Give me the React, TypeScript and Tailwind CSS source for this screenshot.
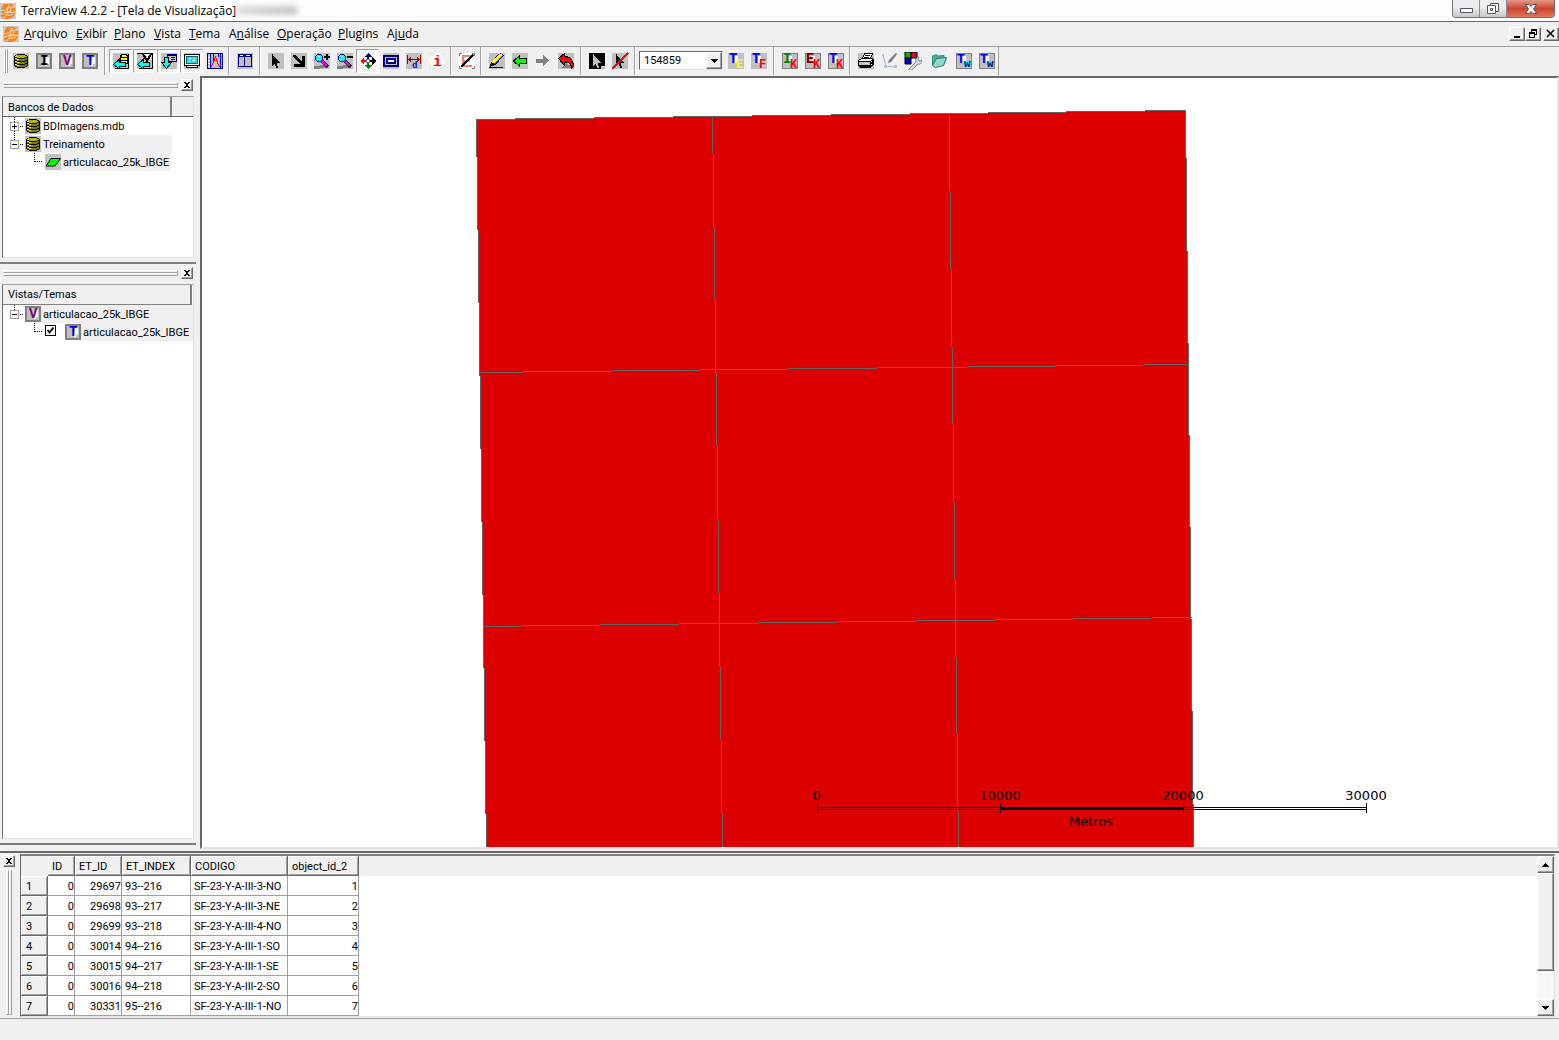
import { ReactNode, useState } from "react";

const uiFont = "font-['Open_Sans','Noto_Sans',sans-serif]";
const listFont = "font-['Roboto','Liberation_Sans',sans-serif]";

// 16x16 toolbar glyph on the classic gray tile
function Icon({ bg = "#c0c0c0", children }: { bg?: string; children: ReactNode }) {
  return (
    <svg viewBox="0 0 16 16" shapeRendering="crispEdges" className="h-4 w-4 shrink-0 overflow-visible" aria-hidden="true">
      <rect width="16" height="16" fill={bg} />
      {children}
    </svg>
  );
}

function Letter({ x, y, size, fill, children }: { x: number; y: number; size: number; fill: string; children: string }) {
  return (
    <text x={x} y={y} fontSize={size} fill={fill} fontWeight="bold" fontFamily="Liberation Mono, monospace">
      {children}
    </text>
  );
}

function AppLogo() {
  return (
    <svg viewBox="0 0 16 16" className="h-4 w-4 shrink-0" aria-hidden="true">
      <rect width="16" height="16" fill="#c9c9c9" />
      <path d="M4 1h8l3 3v6l-2 4-4 2H4l-3-3V8l1-4z" fill="#f58220" />
      <path d="M1 8c2-1 4 0 6-2s4-2 8-2M1 11c3 0 4-2 7-2s4 1 7 0M4 15c1-3 3-3 5-3s3 0 4-1M7 6l1 3-2 3M9 2L7 6M11 5l-1 4" stroke="#ffe9d0" strokeWidth="1" fill="none" />
    </svg>
  );
}

function Database() {
  return (
    <Icon>
      <path d="M1 3h1V2h2V1h8v1h2v1h1v10h-1v1h-2v1H4v-1H2v-1H1z" fill="#000" />
      <path d="M3 2h9v1h2v1h-2v1H4V4H2V3h1z" fill="#b5b500" />
      <path d="M2 5h2v1h8V5h2v2h-2v1H4V7H2zM2 8h2v1h8V8h2v2h-2v1H4v-1H2zM2 11h2v1h8v-1h2v2h-2v1H4v-1H2z" fill="#808000" />
      <path d="M2 3h2v1H2zM2 5h2v1h2v1H4V6H2zM2 8h2v1h2v1H4V9H2zM2 11h2v1h2v1H4v-1H2z" fill="#ffff00" />
    </Icon>
  );
}

function Framed({ letter, color }: { letter: string; color: string }) {
  return (
    <Icon bg="#808080">
      <path d="M2 2h12v12H2z" fill="#c0c0c0" />
      <path d="M10 4h3v7h-2v2h-2z" fill="#fff" />
      <Letter x={4} y={12} size={14} fill={color}>{letter}</Letter>
    </Icon>
  );
}

function Paired({ a, b, ca, cb, framed }: { a: string; b: string; ca: string; cb: string; framed?: boolean }) {
  return (
    <Icon bg={framed ? "#808080" : "#c0c0c0"}>
      {framed && <path d="M1 1h14v14H1z" fill="#c0c0c0" />}
      <path d="M7 3h3v7H7z" fill="#fff" />
      <Letter x={1} y={10} size={14} fill={ca}>{a}</Letter>
      <Letter x={8} y={15} size={12} fill={cb}>{b}</Letter>
    </Icon>
  );
}

const cyanArrow = <path d="M.5 11.5L6 6.5v3h6.5v4H6v2z" fill="#00ffff" stroke="#000" />;

function ToDatabase() {
  return (
    <Icon>
      <path d="M8 1h6v1h1v9H7V2h1z" fill="#000" />
      <path d="M9 2h4v1h1v1H9zM8 5h6v2H8zM8 8h6v2H8z" fill="#ffff00" />
      <path d="M15 1h1v15H2v-1h13z" fill="#000" />
      {cyanArrow}
    </Icon>
  );
}

function ToView() {
  return (
    <Icon>
      <path d="M9 1h5v6h-3z" fill="#fff" />
      <path d="M15 0h1v16H2v-1h13zM0 0h16v1H0z" fill="#000" />
      <path d="M6 1l4 7 4-7" stroke="#000" strokeWidth="2" fill="none" />
      {cyanArrow}
    </Icon>
  );
}

function DownTable() {
  return (
    <Icon>
      <path d="M6 1h10v8H6z" fill="#000080" />
      <path d="M7 3h8v5H7z" fill="#c0c0c0" />
      <path d="M10 4h4v1h-4zM10 6h4v1h-4z" fill="#000080" />
      <path d="M3.500 4.500h4v5h3L5.500 15.500 .500 9.500h3z" fill="#00ffff" stroke="#000" />
    </Icon>
  );
}

function Monitor() {
  return (
    <Icon>
      <path d="M0 1h16v12H0z" fill="#000" />
      <path d="M1 2h14v10H1z" fill="#fff" />
      <path d="M2 3h12v8H2z" fill="#006868" />
      <path d="M3 4h10v6H3z" fill="#20e0e0" />
      <path d="M5 5h2v1H5zM8 7h3v1H8zM5 8h1v1H5zM10 5h1v1h-1z" fill="#fff" />
      <path d="M2 13h12v2H2z" fill="#000" />
      <path d="M3 13h10v1H3z" fill="#fff" />
    </Icon>
  );
}

function Histogram() {
  return (
    <Icon>
      <path d="M0 0h1v16H0zM15 0h1v16h-1zM0 15h16v1H0zM0 0h16v1H0z" fill="#000080" />
      <path d="M3 1h1v14H3zM13 1h1v14h-1zM6 1h1v7H6zM11 1h1v3h-1z" fill="#0000ff" />
      <path d="M1 13h2v1H1zM1 10h2v1H1zM1 7h2v1H1zM1 4h2v1H1z" fill="#fff" />
      <path d="M4 12h1v2H4zM5 10h1v2H5zM6 8h1v2H6zM7 5h1v3H7zM8 3h1v2H8zM9 5h1v3H9zM10 8h1v3h-1zM11 11h1v2h-1zM12 13h1v1h-1z" fill="#ff0000" />
    </Icon>
  );
}

function Windows() {
  return (
    <Icon>
      <path d="M1 1h14v13H1z" fill="#000080" />
      <path d="M2 4h5v9H2zM8 4h6v9H8z" fill="#c0c0c0" />
      <path d="M3 2h3v1H3zM9 2h4v1H9z" fill="#fff" />
    </Icon>
  );
}

const pointer = "M4 1v12h1v-1h1v-1h1v2h1v2h2v-2H9v-3h3V9h-1V8h-1V7H9V6H8V5H7V4H6V3H5V1z";

function Pointer() {
  return <Icon><path d={pointer} fill="#000" /></Icon>;
}

function ArrowCorner() {
  return (
    <Icon>
      <path d="M2 2h2l7 7V3h3v11H3v-3h6L2 4z" fill="#000" />
    </Icon>
  );
}

function Magnifier({ plus }: { plus?: boolean }) {
  return (
    <Icon>
      <path d="M0 13h6v3H0zM6 12h8v3H6z" fill="#808080" />
      <path d="M3 1h4v1h1v1h1v4H8v1H7v1H3V8H2V7H1V3h1V2h1z" fill="#000080" />
      <path d="M3 2h4v1h1v4H7v1H3V7H2V3h1z" fill="#00ffff" />
      <path d="M4 3h2v1H4z" fill="#fff" />
      <path d="M8 8l6 6" stroke="#000" strokeWidth="3" />
      <path d="M8 8l5 5" stroke="#ff00ff" strokeWidth="2" />
      <path d={plus ? "M10 3h6v2h-6zM12 1h2v6h-2z" : "M10 3h6v2h-6z"} fill="#000" />
    </Icon>
  );
}

function Pan() {
  return (
    <Icon bg="none">
      <path d="M8 0l4 4H9v3H7V4H4z" fill="#000080" />
      <path d="M8 16l4-4H9V9H7v3H4z" fill="#008000" />
      <path d="M0 8l4-4v3h3v2H4v3z" fill="#ff0000" />
      <path d="M16 8l-4-4v3H9v2h3v3z" fill="#000" />
      <path d="M6.500 6.500h3v3h-3z" fill="#fff" stroke="#808080" />
    </Icon>
  );
}

function FitWindow() {
  return (
    <Icon>
      <path d="M0 2h16v12H0z" fill="#000080" />
      <path d="M2 4h12v8H2z" fill="#c0c0c0" />
      <path d="M3 5h10v6H3z" fill="#000080" />
      <path d="M5 7h1v2H5zM10 7h1v2h-1zM6 7h4v2H6z" fill="#fff" />
    </Icon>
  );
}

function Distance() {
  return (
    <Icon>
      <path d="M1 2h1v9H1zM14 2h1v9h-1zM2 6h12v1H2zM3 5h1v3H3zM12 5h1v3h-1zM4 4h1v5H4zM11 4h1v5h-1z" fill="#aa0000" />
      <Letter x={6} y={15} size={9} fill="#0000ff">d</Letter>
    </Icon>
  );
}

function Info() {
  return (
    <Icon bg="#dcecf0">
      <circle cx="8" cy="8" r="8" fill="#fff" />
      <Letter x={4} y={13} size={15} fill="#ff0000">i</Letter>
    </Icon>
  );
}

function NoEdit() {
  return (
    <Icon>
      <path d="M2 0h12l2 2v12l-2 2H2l-2-2V2z" fill="#fff" />
      <path d="M3 2h11v2H5v3h6v2H5v3h8v2H3z" fill="#f08080" />
      <path d="M2 14L14 2" stroke="#000" strokeWidth="2" />
      <path d="M0 0h3v1H1v2H0zM13 0h3v3h-1V1h-2zM0 13h1v2h2v1H0zM15 13h1v3h-3v-1h2z" fill="#808080" />
    </Icon>
  );
}

function Pencil() {
  return (
    <Icon>
      <path d="M4 11L13 1" stroke="#000080" strokeWidth="5" />
      <path d="M4 10L12 1" stroke="#ffff00" strokeWidth="3" />
      <path d="M5 11L14 2" stroke="#808080" strokeWidth="1" />
      <path d="M1 14l1-5 4 3z" fill="#000" />
      <path d="M0 14h14v1H0z" fill="#000" />
    </Icon>
  );
}

function Previous() {
  return <Icon><path d="M1.500 8L7.500 2.500v3h7v5h-7v3z" fill="#00ff00" stroke="#000" /></Icon>;
}

function Next() {
  return (
    <Icon bg="#f0f0f0">
      <path d="M2 7h6V3l7 6-7 5v-4H2z" fill="#fff" />
      <path d="M1 6h7V2l6 6-6 5v-3H1z" fill="#808080" />
    </Icon>
  );
}

function Undo() {
  return (
    <Icon>
      <path d="M8 10l8 5H4z" fill="#808080" />
      <path d="M.5 5.500L6.500.500v3c6 0 9 5 9 10l-2 2c0-5-3-7-7-6v3z" fill="#ff0000" stroke="#000" />
    </Icon>
  );
}

function InvertPointer() {
  return (
    <Icon bg="#000">
      <path d={pointer} fill="#c0c0c0" />
      <path d="M12 13h4v3h-4z" fill="#c0c0c0" />
    </Icon>
  );
}

function ClearPointer() {
  return (
    <Icon>
      <path d={pointer} fill="#000" />
      <path d="M0 16L16 0" stroke="#ff0000" strokeWidth="2" />
    </Icon>
  );
}

function Printer() {
  return (
    <Icon>
      <path d="M4.500 5.500l2-5h8l-2 5z" fill="#fff" stroke="#000" />
      <path d="M7 2h5v1H7zM6 4h5v1H6z" fill="#000" />
      <path d="M.500 7.500l3-2h11l1 1v5l-3 3h-10l-2-2z" fill="#fff" stroke="#000" />
      <path d="M1 8h11v1H1zM1 12h11v2H1zM12 8l3-2v6l-3 2z" fill="#000" />
      <path d="M1 9h11v3H1z" fill="#c0c0c0" />
      <path d="M7 10h3v1H7z" fill="#ffff00" />
      <path d="M13 8h1v1h-1zM13 11h1v1h-1z" fill="#fff" />
    </Icon>
  );
}

function DrawPen() {
  return (
    <svg viewBox="0 0 16 16" className="h-4 w-4" aria-hidden="true">
      <path d="M2 2l3 11 9 1" stroke="#9db9d8" fill="none" />
      <path d="M1 1h2v2H1zM3 12h3v3H3zM13 12h3v3h-3z" fill="#a9c4e4" />
      <path d="M15 0l-7 7-1 3 3-1 6-8z" fill="#777" stroke="#aaa" strokeWidth=".5" />
    </svg>
  );
}

function ColorTools() {
  return (
    <svg viewBox="0 0 18 18" className="h-[18px] w-[18px]" aria-hidden="true">
      <path d="M1 0h6v6H1z" fill="#00b400" stroke="#000" />
      <path d="M7 0h6v6H7z" fill="#e00030" stroke="#000" />
      <path d="M1 6h6v6H1z" fill="#0000c8" stroke="#000" />
      <path d="M5 17l7-7c-1-3 1-5 3-5l-1 3 2 1 2-1c0 3-2 5-4 4l-6 6c-2 1-4 0-3-1z" fill="#d6dde6" stroke="#7e8894" />
    </svg>
  );
}

function OpenFolder() {
  return (
    <svg viewBox="0 0 16 16" className="h-4 w-4" aria-hidden="true">
      <path d="M1.500 12V3l4-1.500L7 3l6-.5V6" fill="#4fae9c" stroke="#2d8b7c" />
      <path d="M1.500 12.500l4-7 10-1-3 8-8 2z" fill="#8fdcca" stroke="#22796c" />
    </svg>
  );
}

function ThemeWindow() {
  return (
    <Icon bg="#808080">
      <path d="M1 1h14v14H1z" fill="#c0c0c0" />
      <path d="M7 3h3v6H7z" fill="#fff" />
      <Letter x={1} y={10} size={13} fill="#0000ff">T</Letter>
      <path d="M8 8h7v5h-2v1h-1v-1h-1v1h-1v-1H8z" fill="#00ffff" />
      <Letter x={8} y={14} size={11} fill="#000080">w</Letter>
    </Icon>
  );
}

type Tool = { name: string; icon: ReactNode; width?: string; pressed?: boolean };

function ToolGroup({ tools, end = "pr-2" }: { tools: Tool[]; end?: string }) {
  return (
    <div className={`flex items-center ${end}`}>
      {tools.map((tool) => (
        <button
          key={tool.name}
          aria-label={tool.name}
          className={`flex h-6 items-center justify-center ${tool.width ?? "w-[23px]"} ${
            tool.pressed
              ? "border border-t-[#a0a0a0] border-l-[#a0a0a0] border-r-white border-b-white bg-[repeating-conic-gradient(#fff_0_25%,#f0f0f0_0_50%)] bg-[length:2px_2px]"
              : ""
          }`}
        >
          {tool.icon}
        </button>
      ))}
    </div>
  );
}

function Separator() {
  return <div className="-ml-[5px] mr-[3px] h-7 w-[2px] border-l border-l-[#a0a0a0] border-r border-r-white" />;
}

const dataTools: Tool[] = [
  { name: "Banco de dados", icon: <Database /> },
  { name: "Importar", icon: <Framed letter="I" color="#000" /> },
  { name: "Vista", icon: <Framed letter="V" color="#800080" /> },
  { name: "Tema", icon: <Framed letter="T" color="#0000ff" /> },
];
const panelTools: Tool[] = [
  { name: "Painel de bancos", icon: <ToDatabase />, width: "w-6", pressed: true },
  { name: "Painel de vistas", icon: <ToView />, width: "w-6", pressed: true },
  { name: "Painel de tabela", icon: <DownTable />, pressed: true },
  { name: "Painel de desenho", icon: <Monitor />, pressed: true },
  { name: "Histograma", icon: <Histogram /> },
];
const windowTools: Tool[] = [{ name: "Janelas", icon: <Windows /> }];
const cursorTools: Tool[] = [
  { name: "Cursor", icon: <Pointer /> },
  { name: "Zoom por área", icon: <ArrowCorner /> },
  { name: "Ampliar", icon: <Magnifier plus /> },
  { name: "Reduzir", icon: <Magnifier /> },
  { name: "Mover", icon: <Pan />, pressed: true },
  { name: "Enquadrar", icon: <FitWindow /> },
  { name: "Distância", icon: <Distance /> },
  { name: "Informação", icon: <Info /> },
];
const editTools: Tool[] = [{ name: "Sem edição", icon: <NoEdit /> }];
const drawTools: Tool[] = [
  { name: "Desenhar", icon: <Pencil /> },
  { name: "Anterior", icon: <Previous /> },
  { name: "Próximo", icon: <Next /> },
  { name: "Desfazer", icon: <Undo /> },
];
const selectTools: Tool[] = [
  { name: "Inverter seleção", icon: <InvertPointer /> },
  { name: "Limpar seleção", icon: <ClearPointer /> },
];
const scaleTools: Tool[] = [
  { name: "Tema por escala", icon: <Paired a="T" b="E" ca="#0000ff" cb="#ffff00" /> },
  { name: "Tema fixo", icon: <Paired a="T" b="F" ca="#0000ff" cb="#ff0000" /> },
];
const kernelTools: Tool[] = [
  { name: "Importar KML", icon: <Paired framed a="I" b="K" ca="#008000" cb="#ff0000" /> },
  { name: "Exportar KML", icon: <Paired framed a="E" b="K" ca="#800000" cb="#ff0000" /> },
  { name: "Tema KML", icon: <Paired framed a="T" b="K" ca="#0000ff" cb="#ff0000" /> },
];
const outputTools: Tool[] = [
  { name: "Imprimir", icon: <Printer /> },
  { name: "Editar geometria", icon: <DrawPen /> },
  { name: "Ferramentas", icon: <ColorTools />, width: "w-[26px]" },
  { name: "Abrir", icon: <OpenFolder />, width: "w-[26px]" },
  { name: "Tema web", icon: <ThemeWindow /> },
  { name: "Serviço web", icon: <ThemeWindow /> },
];

const raised = "border border-t-white border-l-white border-r-[#696969] border-b-[#696969] bg-[#f0f0f0] shadow-[inset_-1px_-1px_0_#a0a0a0]";

const menus = [
  ["", "A", "rquivo", "w-[52px]"],
  ["", "E", "xibir", "w-[38px]"],
  ["", "P", "lano", "w-10"],
  ["", "V", "ista", "w-[35px]"],
  ["", "T", "ema", "w-10"],
  ["A", "n", "álise", "w-12"],
  ["", "O", "peração", "w-[61px]"],
  ["", "P", "lugins", "w-[49px]"],
  ["Aj", "u", "da", "w-10"],
];

function TitleBar() {
  return (
    <header className="flex h-[22px] shrink-0 items-start justify-between border-b border-[#696969] bg-[#fdfdfd]">
      <div className="flex h-[21px] items-center gap-[5px]">
        <AppLogo />
        <h1 className="text-xs whitespace-nowrap">TerraView 4.2.2 - [Tela de Visualização]</h1>
        <span className="-ml-1 h-[7px] w-[60px] bg-linear-to-r from-[#d4d4d4] to-[#b4b4b4] blur-[3px]" />
      </div>
      <div className="mr-1 flex h-[18px] overflow-hidden rounded-b-[4px] border border-t-0 border-[#707078]">
        <button aria-label="Minimizar" className="flex w-[27px] items-center justify-center border-r border-[#8c8c94] bg-linear-to-b from-[#eeeef0] from-40% to-[#c8c8cc]">
          <svg viewBox="0 0 13 5" className="mt-1 h-[5px] w-[13px]"><path d="M.5.5h12v4H.5z" fill="#fff" stroke="#535666" /></svg>
        </button>
        <button aria-label="Restaurar" className="flex w-[27px] items-center justify-center border-r border-[#8c8c94] bg-linear-to-b from-[#eeeef0] from-40% to-[#c8c8cc]">
          <svg viewBox="0 0 12 12" className="h-3 w-3" fill="#fff" stroke="#535666">
            <path d="M3.500.500h8v8h-8z" />
            <path d="M.500 2.500h8v8h-8z" />
            <path d="M3.500 5.500h2v2h-2z" />
          </svg>
        </button>
        <button aria-label="Fechar" className="flex w-[47px] items-center justify-center bg-linear-to-b from-[#e59a88] via-[#c9452c] via-50% to-[#dd7358]">
          <svg viewBox="0 0 12 10" className="h-[10px] w-3"><path d="M.5.500h3.500l2 2 2-2h3.500L8.500 5l3 4.500H8l-2-2-2 2H.500l3-4.500z" fill="#fff" stroke="#535666" /></svg>
        </button>
      </div>
    </header>
  );
}

function MenuBar() {
  return (
    <nav className="flex h-[25px] shrink-0 items-center border-b border-[#a0a0a0] pl-[3px]">
      <AppLogo />
      <div className="ml-[5px] flex flex-1">
        {menus.map(([before, key, after, width]) => (
          <button key={before + key + after} className={`text-left text-xs whitespace-nowrap ${width}`}>
            {before}
            <span className="underline">{key}</span>
            {after}
          </button>
        ))}
      </div>
      <div className="flex">
        <button aria-label="Minimizar documento" className={`flex h-[14px] w-4 items-center justify-center ${raised}`}>
          <svg viewBox="0 0 10 10" shapeRendering="crispEdges" className="h-[10px] w-[10px]"><path d="M2 7h6v2H2z" /></svg>
        </button>
        <button aria-label="Restaurar documento" className={`mr-[2px] flex h-[14px] w-4 items-center justify-center ${raised}`}>
          <svg viewBox="0 0 10 10" shapeRendering="crispEdges" className="h-[10px] w-[10px]">
            <path d="M3 0h6v6H7V5h1V2H4v1H3zM1 3h6v6H1zM2 5v3h4V5z" fillRule="evenodd" />
          </svg>
        </button>
        <button aria-label="Fechar documento" className={`flex h-[14px] w-4 items-center justify-center ${raised}`}>
          <svg viewBox="0 0 10 10" className="h-[10px] w-[10px]"><path d="M1 1l7 7M8 1L1 8" stroke="#000" strokeWidth="1.500" /></svg>
        </button>
      </div>
    </nav>
  );
}

function Toolbar() {
  const [scale, setScale] = useState("154859");
  return (
    <div className="flex h-[29px] shrink-0 items-center pb-[2px]">
      <div className="mr-px ml-1 flex h-6">
        <span className="w-[2px] border-l border-l-white border-r border-r-[#a0a0a0]" />
        <span className="w-[2px] border-l border-l-white border-r border-r-[#a0a0a0]" />
      </div>
      <ToolGroup tools={dataTools} />
      <Separator />
      <ToolGroup tools={panelTools} end="pr-[7px]" />
      <Separator />
      <ToolGroup tools={windowTools} />
      <Separator />
      <ToolGroup tools={cursorTools} end="pr-[7px]" />
      <Separator />
      <ToolGroup tools={editTools} end="pr-[7px]" />
      <Separator />
      <ToolGroup tools={drawTools} />
      <Separator />
      <ToolGroup tools={selectTools} />
      <Separator />
      <div className={`mr-px flex h-[19px] w-[84px] border border-t-[#696969] border-l-[#696969] border-r-[#e3e3e3] border-b-[#e3e3e3] bg-white ${listFont}`}>
        <input
          aria-label="Escala"
          value={scale}
          onChange={(e) => setScale(e.target.value)}
          className="min-w-0 flex-1 pt-px pl-1 text-[11px] outline-none"
        />
        <button aria-label="Escolher escala" className={`flex w-4 items-center justify-center ${raised}`}>
          <svg viewBox="0 0 7 4" shapeRendering="crispEdges" className="h-1 w-[7px]"><path d="M0 0h7v1H6v1H5v1H4v1H3V3H2V2H1V1H0z" /></svg>
        </button>
      </div>
      <ToolGroup tools={scaleTools} />
      <Separator />
      <ToolGroup tools={kernelTools} end="pr-[7px]" />
      <Separator />
      <ToolGroup tools={outputTools} end="pr-0" />
      <div className="h-7 w-px bg-[#a0a0a0]" />
    </div>
  );
}

function CloseButton({ label }: { label: string }) {
  return (
    <button aria-label={label} className={`flex h-3 w-3 shrink-0 items-center justify-center ${raised}`}>
      <svg viewBox="0 0 6 6" shapeRendering="crispEdges" className="h-[6px] w-[6px] shrink-0">
        <path d="M0 0h2v1h2V0h2v1H5v1H4v2h1v1h1v1H4V5H2v1H0V5h1V4h1V2H1V1H0z" />
      </svg>
    </button>
  );
}

const grip = "border border-t-white border-l-white border-r-[#a0a0a0] border-b-[#a0a0a0]";

function DockHandle({ label }: { label: string }) {
  return (
    <div className="flex h-[14px] items-center gap-[3px] pr-[3px] pl-[3px]">
      <div className="flex-1">
        <div className={`h-[3px] ${grip}`} />
        <div className={`h-[3px] ${grip}`} />
      </div>
      <CloseButton label={label} />
    </div>
  );
}

const listBox = "mr-[2px] ml-[2px] flex flex-col border border-t-[#a0a0a0] border-l-[#696969] border-r-[#e3e3e3] border-b-[#e3e3e3] bg-white text-[11px]";
const treeText = "h-[18px] pt-px leading-[18px]";

function TreeBox({ open, more }: { open: boolean; more?: boolean }) {
  return (
    <svg viewBox="0 0 16 18" shapeRendering="crispEdges" className="h-[18px] w-4 shrink-0" aria-hidden="true">
      <path d={more ? "M5.500 0v18M9 9.500h6" : "M5.500 0v9M9 9.500h6"} stroke="#000" strokeDasharray="1 1" />
      <path d="M1.500 5.500h8v8h-8z" fill="#fff" stroke="#a0a0a0" />
      <path d={open ? "M3 9h5v1H3z" : "M3 9h5v1H3zM5 7h1v5H5z"} />
    </svg>
  );
}

function TreeBranch() {
  return (
    <svg viewBox="0 0 12 18" shapeRendering="crispEdges" className="h-[18px] w-3 shrink-0" aria-hidden="true">
      <path d="M1.500 0v9M2 8.500h8" stroke="#000" strokeDasharray="1 1" fill="none" />
    </svg>
  );
}

function DatabasePanel() {
  return (
    <section className="flex h-[188px] shrink-0 flex-col border-b-2 border-[#808080] pt-[2px]">
      <DockHandle label="Fechar Bancos de Dados" />
      <div className={`mt-1 mb-1 flex-1 ${listBox}`}>
        <div className="flex h-5 border-b border-[#696969] bg-[#f0f0f0] leading-[20px]">
          <span className="w-[169px] border-r-2 border-[#808080] pt-px pl-[5px]">Bancos de Dados</span>
        </div>
        <div className="flex h-[18px] items-center pl-[6px]">
          <TreeBox open={false} more />
          <Database />
          <span className={`pl-[2px] ${treeText}`}>BDImagens.mdb</span>
        </div>
        <div className="flex h-[18px] items-center pl-[6px]">
          <TreeBox open />
          <Database />
          <span className={`w-[131px] bg-[#f0f0f0] pl-[2px] ${treeText}`}>Treinamento</span>
        </div>
        <div className="flex h-[18px] items-center pl-[30px]">
          <TreeBranch />
          <svg viewBox="0 0 16 16" className="h-4 w-4 shrink-0" aria-hidden="true">
            <rect width="16" height="16" fill="#c0c0c0" />
            <path d="M1 12L6 4.500h9.500L10 12z" fill="#00ff00" stroke="#000" />
          </svg>
          <span className={`w-[110px] bg-[#f0f0f0] pl-[2px] ${treeText}`}>articulacao_25k_IBGE</span>
        </div>
      </div>
    </section>
  );
}

function ViewPanel() {
  const [visible, setVisible] = useState(true);
  return (
    <section className="flex min-h-0 flex-1 flex-col border-b-2 border-[#808080] pt-[2px]">
      <DockHandle label="Fechar Vistas/Temas" />
      <div className={`mt-1 mb-1 min-h-0 flex-1 ${listBox}`}>
        <div className="mr-px h-5 border-r-2 border-b border-[#808080] bg-[#f0f0f0] pt-px pl-[5px] leading-[18px]">Vistas/Temas</div>
        <div className="flex h-[18px] items-center pl-[6px]">
          <TreeBox open />
          <Framed letter="V" color="#800080" />
          <span className={`flex-1 bg-[#f0f0f0] pl-[2px] ${treeText}`}>articulacao_25k_IBGE</span>
        </div>
        <label className="flex h-[18px] items-center pl-[30px]">
          <TreeBranch />
          <span className="relative mr-[9px] -mt-1 flex h-[11px] w-[11px]">
            <input
              type="checkbox"
              checked={visible}
              onChange={(e) => setVisible(e.target.checked)}
              className="h-[11px] w-[11px] appearance-none border border-black bg-white"
            />
            {visible && (
              <svg viewBox="0 0 11 11" className="pointer-events-none absolute inset-0 h-[11px] w-[11px]">
                <path d="M2.500 5l2 2.500 4-5" stroke="#000" strokeWidth="2" fill="none" />
              </svg>
            )}
          </span>
          <Framed letter="T" color="#0000ff" />
          <span className={`flex-1 bg-[#f0f0f0] pl-[2px] ${treeText}`}>articulacao_25k_IBGE</span>
        </label>
      </div>
    </section>
  );
}

const scaleMarks = [
  { x: 615, label: "0" },
  { x: 798, label: "10000" },
  { x: 981, label: "20000" },
  { x: 1164, label: "30000" },
];

function MapView() {
  return (
    <main className="min-w-0 flex-1 border-2 border-t-[#696969] border-l-[#696969] border-r-[#e3e3e3] border-b-[#e3e3e3] bg-white">
      <svg className="block h-full w-full" role="img" aria-label="Mapa">
        <g shapeRendering="crispEdges">
          <path d="M274.500 41.500L983.500 32.500 991.500 771H284.500z" fill="#dc0000" stroke="#646464" />
          <path d="M510.500 38L520.500 771M747 35L756.500 771M277 294.500L987 286.500M281 548.500L990 539.500" stroke="#646464" fill="none" />
          {/* scale ruler */}
          <path d="M615 729h549v1H615zM615 731h549v1H615zM798 729h183v3H798z" fill="#000" />
          {scaleMarks.map((mark) => (
            <path key={mark.x} d={`M${mark.x} 725h1v10h-1z`} fill="#000" />
          ))}
        </g>
        <g fontSize="13" fontFamily="DejaVu Sans, Verdana, sans-serif" textAnchor="middle">
          {scaleMarks.map((mark) => (
            <text key={mark.x} x={mark.x} y="722">{mark.label}</text>
          ))}
          <text x="889" y="748">Metros</text>
        </g>
      </svg>
    </main>
  );
}

const rows = [
  [0, 29697, "93--216", "SF-23-Y-A-III-3-NO", 1],
  [0, 29698, "93--217", "SF-23-Y-A-III-3-NE", 2],
  [0, 29699, "93--218", "SF-23-Y-A-III-4-NO", 3],
  [0, 30014, "94--216", "SF-23-Y-A-III-1-SO", 4],
  [0, 30015, "94--217", "SF-23-Y-A-III-1-SE", 5],
  [0, 30016, "94--218", "SF-23-Y-A-III-2-SO", 6],
  [0, 30331, "95--216", "SF-23-Y-A-III-1-NO", 7],
];

function AttributeTable() {
  const head = "h-5 border-r border-b border-[#696969] bg-[#f0f0f0] p-0 pt-[2px] text-left leading-[16px] font-normal shadow-[inset_1px_1px_0_#fff,inset_-1px_-1px_0_#a0a0a0]";
  const cell = "h-5 overflow-hidden border-r border-b border-[#a0a0a0] p-0 pt-[2px] leading-[16px] whitespace-nowrap";
  return (
    <section className="flex h-[168px] shrink-0 border-t-2 border-b border-t-[#696969] border-b-[#a0a0a0]">
      <div className="flex w-5 flex-col items-center gap-[3px] pt-[2px] pr-[2px] pb-[3px]">
        <CloseButton label="Fechar tabela" />
        <div className="flex flex-1">
          <div className={`w-[3px] ${grip}`} />
          <div className={`w-[3px] ${grip}`} />
        </div>
      </div>
      <div className="mt-px mr-1 mb-px flex flex-1 border border-t-2 border-t-[#808080] border-l-[#696969] border-r-[#e3e3e3] border-b-[#e3e3e3] bg-white">
        <div className="flex-1 bg-linear-to-b from-[#f0f0f0] from-[20px] to-white to-[20px]">
          <table className="w-[338px] table-fixed border-separate border-spacing-0 text-[11px]">
            <colgroup>
              <col className="w-[27px]" />
              <col className="w-[27px]" />
              <col className="w-[47px]" />
              <col className="w-[69px]" />
              <col className="w-[97px]" />
              <col className="w-[71px]" />
            </colgroup>
            <thead>
              <tr>
                <td className="h-5 bg-[#f0f0f0] p-0" />
                {["ID", "ET_ID", "ET_INDEX", "CODIGO", "object_id_2"].map((name) => (
                  <th key={name} className={`${head} pl-1`}>{name}</th>
                ))}
              </tr>
            </thead>
            <tbody>
              {rows.map(([id, etId, index, code, objectId]) => (
                <tr key={objectId}>
                  <th className={`${head} pl-[5px]`}>{objectId}</th>
                  <td className={`${cell} text-right`}>{id}</td>
                  <td className={`${cell} text-right`}>{etId}</td>
                  <td className={`${cell} pl-[3px]`}>{index}</td>
                  <td className={`${cell} pl-[3px]`}>{code}</td>
                  <td className={`${cell} text-right`}>{objectId}</td>
                </tr>
              ))}
            </tbody>
          </table>
        </div>
        <div className="flex w-[17px] flex-col bg-[repeating-conic-gradient(#fff_0_25%,#f0f0f0_0_50%)] bg-[length:2px_2px]">
          <button aria-label="Rolar para cima" className={`flex h-[17px] items-center justify-center ${raised}`}>
            <svg viewBox="0 0 7 4" shapeRendering="crispEdges" className="h-1 w-[7px]"><path d="M3 0h1v1h1v1h1v1h1v1H0V3h1V2h1V1h1z" /></svg>
          </button>
          <div className={`h-[98px] ${raised}`} />
          <button aria-label="Rolar para baixo" className={`mt-auto flex h-[17px] items-center justify-center ${raised}`}>
            <svg viewBox="0 0 7 4" shapeRendering="crispEdges" className="h-1 w-[7px]"><path d="M0 0h7v1H6v1H5v1H4v1H3V3H2V2H1V1H0z" /></svg>
          </button>
        </div>
      </div>
    </section>
  );
}

export default function App() {
  return (
    <div className={`flex h-screen flex-col overflow-hidden bg-[#f0f0f0] text-black ${uiFont}`}>
      <TitleBar />
      <MenuBar />
      <Toolbar />
      <div className={`flex min-h-0 flex-1 ${listFont}`}>
        <aside className="mr-1 flex w-[196px] shrink-0 flex-col pb-1">
          <DatabasePanel />
          <ViewPanel />
        </aside>
        <MapView />
      </div>
      <div className={`mt-[2px] shrink-0 ${listFont}`}>
        <AttributeTable />
      </div>
      <footer className="h-[21px] shrink-0" />
    </div>
  );
}
